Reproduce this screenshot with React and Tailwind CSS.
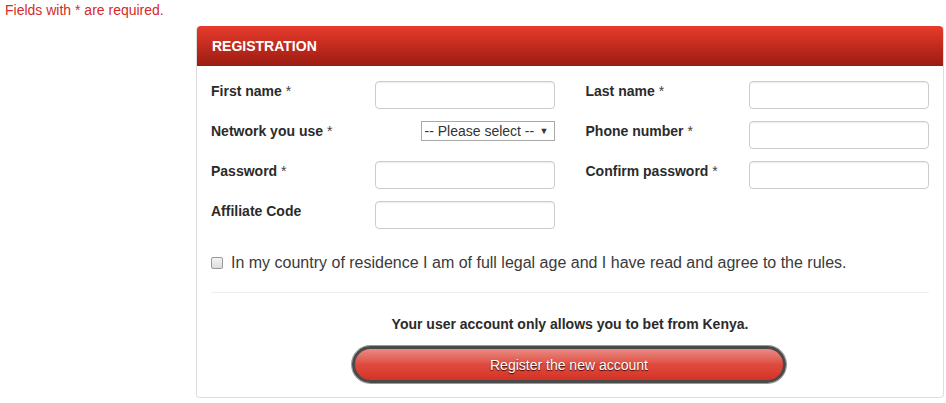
import React from "react";

const font = { fontFamily: '"Liberation Sans", Arial, sans-serif' };

function Field({ label, req, children }) {
  return (
    <div className="flex h-[28px] items-start justify-between">
      <div className="mt-[1px] text-[14px] font-bold leading-[18px] text-[#2b2b2b]">
        {label}
        {req && <span className="font-normal text-[#444]"> *</span>}
      </div>
      {children}
    </div>
  );
}

function TextInput() {
  return (
    <div className="h-[28px] w-[180px] rounded-[4px] border border-[#ccc] bg-white shadow-[inset_0_1px_1px_rgba(0,0,0,0.075)]" />
  );
}

function Select() {
  return (
    <div className="flex h-[20px] w-[134px] items-center justify-between border border-[#a9a9a9] bg-white pl-[3px] pr-[5px] text-[14px] leading-[18px] text-[#333]">
      <span>-- Please select --</span>
      <span className="text-[9px] leading-none">▼</span>
    </div>
  );
}

export default function App() {
  return (
    <div style={font} className="relative h-[403px] w-[946px] bg-white">
      <div className="pl-[5px] pt-[2px] text-[14px] leading-[16px] text-[#d32a2a]">Fields with * are required.</div>
      <div className="ml-[196px] mt-[8px] w-[748px] rounded-[4px] border border-[#ddd] border-t-0 bg-white">
        <div className="flex h-[40px] items-center rounded-t-[4px] bg-gradient-to-b from-[#e83b2c] to-[#9c1b10] px-[15px] text-[14px] font-bold text-white">
          REGISTRATION
        </div>
        <div className="px-[14px] pt-[15px] pb-[14px]">
          <div className="grid grid-cols-2 gap-x-[31px] gap-y-[12px]">
            <Field label="First name" req><TextInput /></Field>
            <Field label="Last name" req><TextInput /></Field>
            <Field label="Network you use" req><Select /></Field>
            <Field label="Phone number" req><TextInput /></Field>
            <Field label="Password" req><TextInput /></Field>
            <Field label="Confirm password" req><TextInput /></Field>
            <Field label="Affiliate Code"><TextInput /></Field>
            <div />
          </div>
          <div className="mt-[24px] flex items-center gap-[8px] text-[16px] leading-[20px] text-[#3a3a3a]">
            <div className="h-[12px] w-[12px] rounded-[2px] border border-[#999] bg-gradient-to-b from-[#f4f4f4] to-[#dcdcdc]" />
            <span>In my country of residence I am of full legal age and I have read and agree to the rules.</span>
          </div>
          <div className="mt-[19px] h-px bg-[#eee]" />
          <div className="mt-[22px] text-center text-[14px] font-bold leading-[18px] text-[#2b2b2b]">
            Your user account only allows you to bet from Kenya.
          </div>
          <div className="mt-[13px] flex justify-center">
            <div className="ml-[-2px] flex h-[37px] w-[434px] items-center justify-center rounded-full border-[3px] border-[#4a4a4a] bg-gradient-to-b from-[#e98a84] via-[#df4a3e] to-[#d43225] pt-[1px] text-[14px] text-white shadow-[0_0_0_1px_#9a9a9a] [text-shadow:0_1px_1px_rgba(0,0,0,0.8)]">
              Register the new account
            </div>
          </div>
        </div>
      </div>
    </div>
  );
}
